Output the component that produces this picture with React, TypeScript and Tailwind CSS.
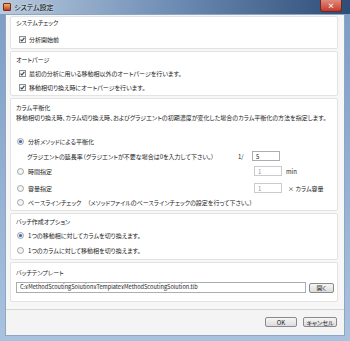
import React from 'react';

const font = "font-['Noto_Sans_CJK_JP','Noto_Sans',sans-serif] [font-feature-settings:'palt']";

const CheckBox: React.FC<{ checked?: boolean }> = ({ checked }) => (
    <svg width="7" height="7" viewBox="0 0 7 7" className="shrink-0">
        <rect x="0.5" y="0.5" width="6" height="6" fill="#f4f6f8" stroke="#8e8f8f" />
        {checked && <path d="M1.6 3.6 L2.9 5 L5.4 1.8" fill="none" stroke="#2a3b5a" strokeWidth="1.1" />}
    </svg>
);

const Radio: React.FC<{ checked?: boolean }> = ({ checked }) => (
    <svg width="7" height="7" viewBox="0 0 7 7" className="shrink-0">
        <circle cx="3.5" cy="3.5" r="3" fill="#f3f4f6" stroke="#8e8f8f" strokeWidth="0.8" />
        {checked && <circle cx="3.5" cy="3.5" r="1.6" fill="#3b66b0" />}
    </svg>
);

const Group: React.FC<{ className?: string; children: React.ReactNode }> = ({ className, children }) => (
    <div className={`bg-white border border-[#e3e3e3] rounded-[2px] pl-[5px] ${className ?? ''}`}>{children}</div>
);

const Row: React.FC<{ className?: string; children: React.ReactNode }> = ({ className, children }) => (
    <div className={`h-[10px] flex items-center ${className ?? ''}`}>{children}</div>
);

const SmallInput: React.FC<{ value: string; disabled?: boolean }> = ({ value, disabled }) => (
    <div className={`w-[28px] h-[10px] border ${disabled ? 'border-[#c9cbd0] text-[#9a9a9a]' : 'border-[#abadb3] text-[#222]'} bg-white flex items-center pl-[3px] text-[6px]`}>
        {value}
    </div>
);

const WinButton: React.FC<{ label: string; className?: string }> = ({ label, className }) => (
    <div className={`h-[10px] border border-[#8a8a8a] rounded-[2px] bg-gradient-to-b from-[#f6f6f6] to-[#dcdcdc] flex items-center justify-center text-[6px] text-[#222] ${className ?? ''}`}>
        {label}
    </div>
);

const App: React.FC = () => {
    return (
        <div className={`w-[350px] h-[341px] flex flex-col bg-gradient-to-b from-[#7d9cc4] to-[#a9c2df] ${font} text-[#222]`}>
            {/* title bar */}
            <div className="h-[14px] flex items-center bg-gradient-to-r from-[#b8cade] via-[#6d8cb3] to-[#2f4e77] relative">
                <div className="ml-[3px] w-[8px] h-[8px] rounded-[1px] bg-gradient-to-b from-[#f3b35a] to-[#c0392b] border border-[#7a2a18]" />
                <span className="ml-[3px] text-[7px] text-black [text-shadow:0_0_3px_#fff]">システム設定</span>
                <div className="ml-auto mr-[8px] self-start w-[22px] h-[12px] rounded-b-[3px] bg-gradient-to-b from-[#e08a7c] to-[#c4372a] border border-[#6e2a20] border-t-0 flex items-center justify-center text-white text-[7px] font-bold">
                    ×
                </div>
            </div>

            {/* body */}
            <div className="flex-1 mx-[5px] bg-[#f7f7f7] border border-[#8fa6c2] flex flex-col">
                <div className="pt-[1px] pl-[4px] pr-[6px] flex flex-col gap-[2px] text-[6px]">
                    <Group className="pt-0 pb-[4px]">
                        <Row>システムチェック</Row>
                        <Row className="mt-[7px] pl-[3px] gap-[3px]"><CheckBox checked />分析開始前</Row>
                    </Group>

                    <Group className="pt-[2px] pb-[3px]">
                        <Row>オートパージ</Row>
                        <Row className="mt-[4px] pl-[3px] gap-[3px]"><CheckBox checked />最初の分析に用いる移動相以外のオートパージを行います。</Row>
                        <Row className="mt-[4px] pl-[3px] gap-[3px]"><CheckBox checked />移動相切り換え時にオートパージを行います。</Row>
                    </Group>

                    <Group className="pt-[3px] pb-[3px]">
                        <Row>カラム平衡化</Row>
                        <Row>移動相切り換え時、カラム切り換え時、およびグラジエントの初期濃度が変化した場合のカラム平衡化の方法を指定します。</Row>
                        <Row className="mt-[14px] pl-[1px] gap-[4px]"><Radio checked />分析メソッドによる平衡化</Row>
                        <Row className="mt-[5px]">
                            <div className="w-[222px] shrink-0 pl-[11px]">グラジエントの延長率（グラジエントが不要な場合は0を入力して下さい。）</div>
                            <div className="w-[14px] shrink-0">1/</div>
                            <SmallInput value="5" />
                        </Row>
                        <Row className="mt-[5px]">
                            <div className="w-[238px] shrink-0 flex items-center gap-[4px] pl-[1px]"><Radio />時間指定</div>
                            <SmallInput value="1" disabled />
                            <span className="ml-[4px]">min</span>
                        </Row>
                        <Row className="mt-[7px]">
                            <div className="w-[238px] shrink-0 flex items-center gap-[4px] pl-[1px]"><Radio />容量指定</div>
                            <SmallInput value="1" disabled />
                            <span className="ml-[6px]">× カラム容量</span>
                        </Row>
                        <Row className="mt-[4px] pl-[1px] gap-[4px]"><Radio />ベースラインチェック　（メソッドファイルのベースラインチェックの設定を行って下さい。）</Row>
                    </Group>

                    <Group className="pt-[2px] pb-[4px]">
                        <Row>バッチ作成オプション</Row>
                        <Row className="mt-[4px] pl-[1px] gap-[4px]"><Radio checked />1つの移動相に対してカラムを切り換えます。</Row>
                        <Row className="mt-[5px] pl-[1px] gap-[4px]"><Radio />1つのカラムに対して移動相を切り換えます。</Row>
                    </Group>

                    <Group className="pt-[4px] pb-[8px]">
                        <Row>バッチテンプレート</Row>
                        <div className="mt-[5px] flex items-center">
                            <div className="w-[290px] h-[11px] border border-[#abadb3] bg-white flex items-center pl-[3px] text-[5.6px]">
                                C:¥MethodScoutingSolution¥Template¥MethodScoutingSolution.tlb
                            </div>
                            <WinButton label="開く" className="ml-[3px] w-[25px]" />
                        </div>
                    </Group>
                </div>

                <div className="mt-[7px] border-t border-[#d6d6d6] flex-1 bg-[#f4f4f4] flex justify-end items-start pt-[7px] pr-[7px] gap-[6px]">
                    <WinButton label="OK" className="w-[32px]" />
                    <WinButton label="キャンセル" className="w-[34px]" />
                </div>
            </div>
            <div className="h-[5px]" />
        </div>
    );
};

export default App;
